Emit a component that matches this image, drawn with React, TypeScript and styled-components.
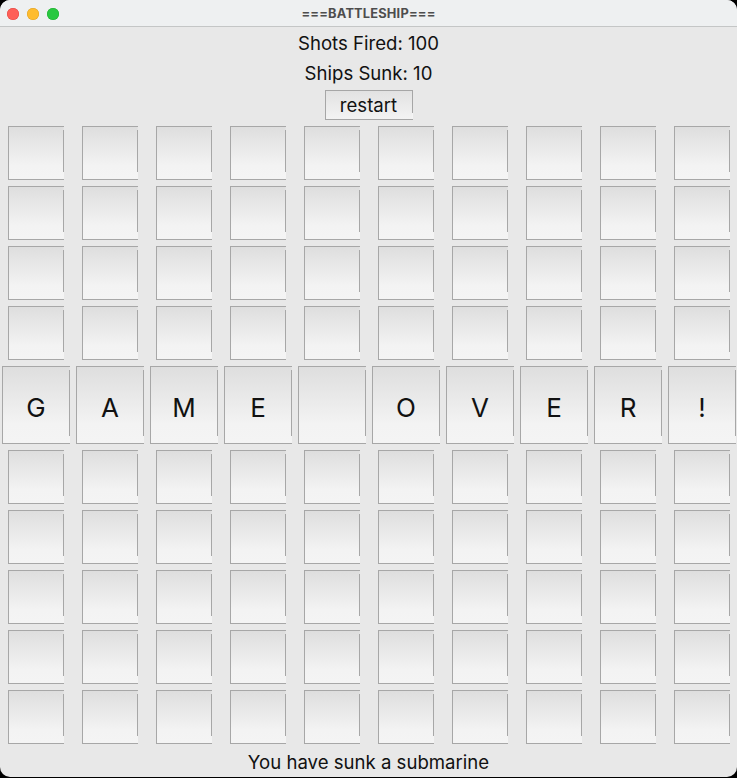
import React from "react";
import styled, { createGlobalStyle } from "styled-components";

const Global = createGlobalStyle`
  html, body { margin: 0; padding: 0; background: #000; }
  body { font-family: Inter, "Liberation Sans", Arial, sans-serif; }
  * { box-sizing: border-box; }
`;

const Window = styled.div`
  width: 737px;
  height: 777px;
  background: #e8e8e8;
  border-radius: 10px;
  overflow: hidden;
  display: flex;
  flex-direction: column;
`;

const TitleBar = styled.div`
  height: 27px;
  flex: none;
  background: #eef0f1;
  border-bottom: 1px solid #c4c6c6;
  display: grid;
  grid-template-columns: 80px 1fr 80px;
  align-items: center;
`;

const Lights = styled.div`
  display: flex;
  gap: 8px;
  padding-left: 7px;
  padding-top: 1px;
`;

const Light = styled.span<{ $c: string; $b: string }>`
  width: 12px;
  height: 12px;
  border-radius: 50%;
  background: ${(p) => p.$c};
  box-shadow: inset 0 0 0 0.5px ${(p) => p.$b};
`;

const Title = styled.div`
  text-align: center;
  font-size: 12.8px;
  font-weight: 700;
  color: #4d4d4d;
  letter-spacing: 0.2px;
`;

const Header = styled.div`
  display: flex;
  flex-direction: column;
  align-items: center;
  padding-top: 1px;
  color: #111;
`;

const Label = styled.div`
  height: 30px;
  line-height: 30px;
  font-size: 18.6px;
`;

const RestartButton = styled.button`
  margin-top: 2px;
  width: 88px;
  height: 30px;
  border: 1px solid #a6a6a6;
  background: linear-gradient(#e2e2e2, #f3f3f3);
  font-family: inherit;
  font-size: 18.6px;
  color: #111;
  padding: 0 0 1px;
  position: relative;
  &::after {
    content: "";
    position: absolute;
    right: -1px;
    bottom: 0;
    width: 1px;
    height: 6px;
    background: #f4f4f4;
  }
`;

const Board = styled.div`
  margin-top: 6px;
  display: flex;
  flex-direction: column;
  gap: 6px;
`;

const Row = styled.div`
  display: grid;
  grid-template-columns: repeat(10, 74px);
  justify-items: start;
`;

const Cell = styled.div<{ $big?: boolean }>`
  position: relative;
  width: ${(p) => (p.$big ? 68 : 56)}px;
  height: ${(p) => (p.$big ? 78 : 54)}px;
  margin-left: ${(p) => (p.$big ? 2 : 8)}px;
  border: 1px solid #a7a7a7;
  background: linear-gradient(#dedede, #f3f3f3 75%, #f4f4f4);
  display: flex;
  align-items: center;
  justify-content: center;
  font-size: 26px;
  color: #111;
  padding-top: 4px;
  &::before {
    content: "";
    position: absolute;
    right: -1px;
    top: 0;
    width: 1px;
    height: 3px;
    background: #e2e2e2;
  }
  &::after {
    content: "";
    position: absolute;
    right: -1px;
    bottom: 0;
    width: 1px;
    height: 7px;
    background: #f4f4f4;
  }
`;

const Status = styled.div`
  flex: 1;
  display: flex;
  align-items: center;
  justify-content: center;
  font-size: 18.6px;
  color: #111;
  padding-top: 3px;
`;

const letters = ["G", "A", "M", "E", "", "O", "V", "E", "R", "!"];

export default function App() {
  const rows = Array.from({ length: 10 }, (_, r) => r);
  return (
    <>
      <Global />
      <Window>
        <TitleBar>
          <Lights>
            <Light $c="#fe5f57" $b="#e14640" />
            <Light $c="#febc2e" $b="#dfa023" />
            <Light $c="#28c840" $b="#1dad2b" />
          </Lights>
          <Title>===BATTLESHIP===</Title>
          <span />
        </TitleBar>
        <Header>
          <Label>Shots Fired: 100</Label>
          <Label>Ships Sunk: 10</Label>
          <RestartButton>restart</RestartButton>
        </Header>
        <Board>
          {rows.map((r) =>
            r === 4 ? (
              <Row key={r}>
                {letters.map((l, i) => (
                  <Cell key={i} $big>
                    {l}
                  </Cell>
                ))}
              </Row>
            ) : (
              <Row key={r}>
                {rows.map((c) => (
                  <Cell key={c} />
                ))}
              </Row>
            )
          )}
        </Board>
        <Status>You have sunk a submarine</Status>
      </Window>
    </>
  );
}
